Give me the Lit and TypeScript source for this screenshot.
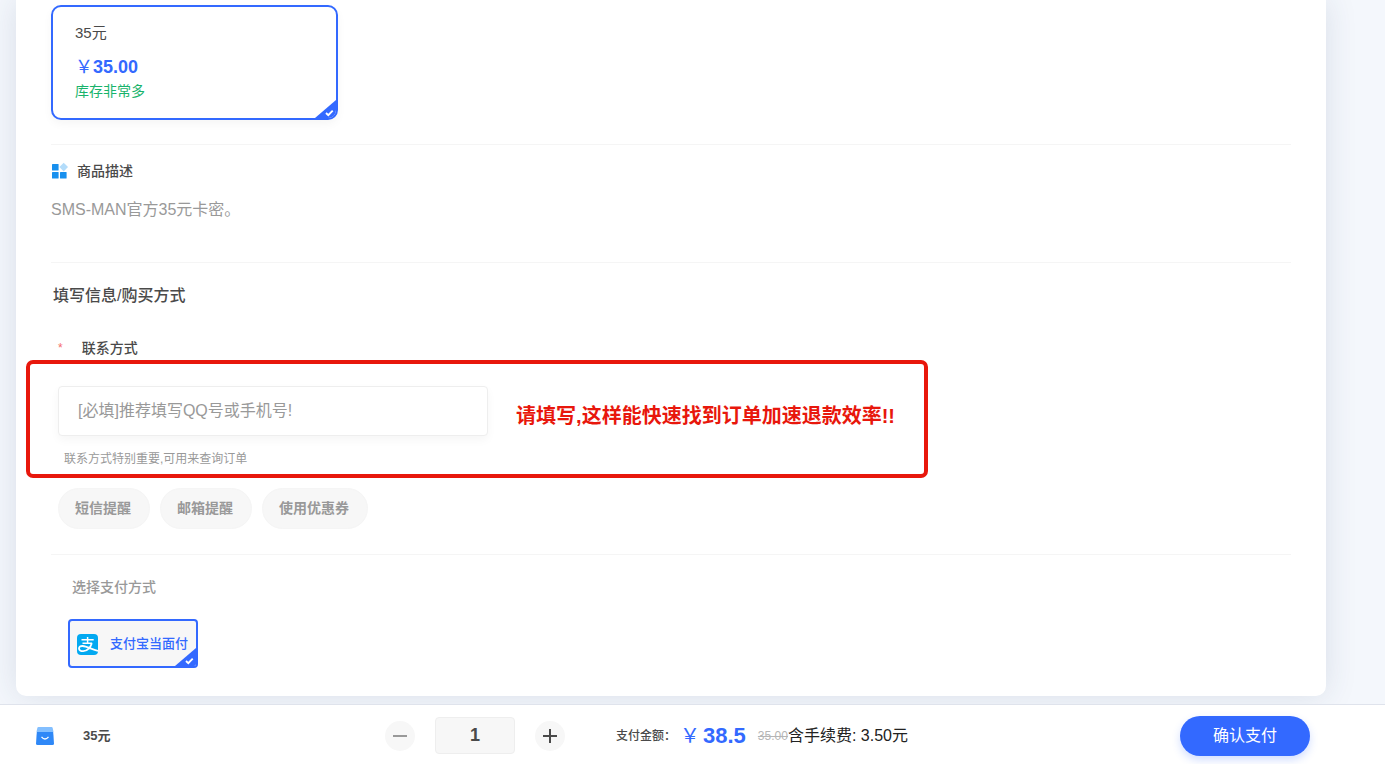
import { LitElement, html, css, svg } from "lit";
import { customElement, property, state } from "lit/decorators.js";

const check = svg`<path d="M11 13l2.300 2.200 4.400-4.600" fill="none" stroke="#fff" stroke-width="1.900"/>`;
const YEN = "\uFFE5";
const COLON = "\uFF1A";

/** Selectable tile with a ticked corner. */
@customElement("pick-tile")
class PickTile extends LitElement {
  @property() name = "";
  @property({ type: Boolean, reflect: true }) compact = false;

  static styles = css`
    :host { display: block; }
    .tile {
      display: block; position: relative; box-sizing: border-box; overflow: hidden;
      border: 2px solid #3369ff; border-radius: 10px; background: #fff;
      box-shadow: 0 4px 10px rgba(0, 0, 0, 0.04); cursor: pointer;
    }
    .compact { border-radius: 4px; background: #f7f7f7; box-shadow: none; }
    .radio { position: absolute; opacity: 0; margin: 0; }
    .corner { position: absolute; right: 0; bottom: 0; display: block; }
  `;

  render() {
    return html`<label class="tile ${this.compact ? "compact" : ""}">
      <input class="radio" type="radio" name=${this.name} checked />
      <slot></slot>
      <svg class="corner" width="21" height="18" viewBox="0 0 21 18" aria-hidden="true">
        <path d="M21 0V18H0z" fill="#3369ff" />${check}
      </svg>
    </label>`;
  }
}

@customElement("app-root")
class AppRoot extends LitElement {
  @state() count = 1;

  static styles = css`
    :host {
      display: flex; flex-direction: column; min-height: 100vh;
      background: #f4f7fc; color: #4a4a4a; overflow: hidden;
      font: 14px/20px "Liberation Sans", "Noto Sans CJK SC", sans-serif;
    }
    * { box-sizing: border-box; }
    h2, p { margin: 0; }
    button, input { font-family: inherit; }
    .card {
      margin: 0 59px 8px 16px; padding: 5px 35px 28px; background: #fff;
      border-radius: 0 0 10px 10px; box-shadow: 0 0 32px rgba(40, 60, 100, 0.13);
    }
    .product { width: 287px; }
    .product-body { display: block; padding: 16px 22px 17px; }
    .product-name { display: block; font-size: 15px; line-height: 20px; }
    .product-price { display: flex; margin-top: 12px; font-size: 18px; line-height: 24px; color: #3369ff; font-weight: 700; }
    .yen { font-weight: 400; }
    .stock { display: block; font-size: 14px; line-height: 20px; margin-top: 2px; color: #18b36b; }
    .section { border-top: 1px solid #f5f5f5; }
    .about { margin-top: 24px; padding: 16px 0 40px; }
    .about-title { display: flex; align-items: center; gap: 8px; font-size: 14px; line-height: 20px; font-weight: 500; }
    .about-text { margin-top: 17px; font-size: 16px; line-height: 24px; color: #999; }
    .form { padding: 21px 0 25px 7px; }
    .form-title { margin-left: -5px; font-size: 16px; line-height: 24px; font-weight: 500; }
    .field-label { display: flex; gap: 19px; margin-top: 30px; line-height: 20px; font-weight: 500; }
    .star { color: #f56c6c; font-size: 12px; font-weight: 400; }
    .contact { position: relative; margin-top: 28px; }
    .contact-input {
      display: block; width: 430px; height: 50px; padding: 0 20px 0 19px;
      border: 1px solid #eee; border-radius: 4px; background: #fff;
      box-shadow: 0 4px 10px rgba(0, 0, 0, 0.04); font-size: 16px; color: #4a4a4a; outline: none;
    }
    .contact-input::placeholder { color: #999; opacity: 1; }
    .hint { margin: 13px 0 0 6px; font-size: 12px; line-height: 20px; color: #999; }
    .callout {
      position: absolute; left: -32px; top: -26px; width: 902px; height: 118px;
      border: 4px solid #e8170c; border-radius: 7px; pointer-events: none;
      display: flex; justify-content: flex-end; padding: 38px 29px 0 0;
      color: #e8170c; font-size: 20px; line-height: 28px; font-weight: 700;
    }
    .pills { display: flex; gap: 10px; margin-top: 19px; }
    .pill {
      height: 41px; padding: 0 18px 3px 16px; border: 1px solid #f5f5f5; border-radius: 21px;
      background: #f7f7f7; color: #999; font-size: 14px; font-weight: 700; cursor: pointer;
    }
    .pay { padding: 22px 0 0 17px; }
    .pay-title { margin-left: 4px; line-height: 20px; font-weight: 500; color: #999; font-size: 14px; }
    .pay-tile { width: 130px; margin-top: 22px; }
    .pay-body { display: flex; align-items: center; gap: 12px; height: 45px; padding: 1px 0 0 7px; white-space: nowrap; font-size: 13px; font-weight: 500; color: #3369ff; }
    .bar {
      display: grid; grid-template-columns: 349px 231px 1fr auto; align-items: center;
      height: 60px; padding: 2px 75px 0 36px; margin-top: auto;
      background: #fff; border-top: 1px solid #dfe3ec; position: relative;
    }
    .order { display: flex; align-items: center; gap: 29px; font-size: 13px; font-weight: 700; }
    .stepper { display: flex; align-items: center; gap: 20px; }
    .step { display: grid; place-items: center; width: 30px; height: 30px; padding: 0; border: 0; border-radius: 50%; background: #f7f7f7; color: #4a4a4a; cursor: pointer; }
    .step:disabled { color: #999; }
    .qty { width: 80px; height: 37px; border: 1px solid #eee; border-radius: 4px; background: #f7f7f7; text-align: center; font-size: 18px; font-weight: 700; color: #4a4a4a; }
    .total { display: flex; align-items: center; white-space: nowrap; }
    .total-label { font-size: 12px; font-weight: 500; }
    .total-price { display: flex; align-items: center; margin: 0 12px 0 4px; color: #3369ff; font-size: 22px; line-height: 28px; font-weight: 700; }
    .total .yen { font-size: 20px; margin-right: 3px; }
    .old { font-size: 12px; color: #b5b5b5; }
    .fee { font-size: 16px; color: #222; }
    .confirm { width: 130px; height: 40px; padding: 0 0 3px; border: 0; border-radius: 20px; background: #3369ff; color: #fff; font-size: 16px; box-shadow: 0 4px 8px rgba(51, 105, 255, 0.22); cursor: pointer; }
  `;

  render() {
    return html`
      <main class="card">
        <pick-tile class="product" name="product">
          <span class="product-body">
            <span class="product-name">35元</span>
            <span class="product-price"><span class="yen">${YEN}</span>35.00</span>
            <span class="stock">库存非常多</span>
          </span>
        </pick-tile>

        <section class="section about">
          <h2 class="about-title">
            <svg width="18" height="18" viewBox="0 0 18 18" aria-hidden="true">
              <g fill="#1890ee">
                <rect x="1" y="2" width="6.600" height="6.600" rx=".6" />
                <rect x="1" y="10" width="6.600" height="6.600" rx=".6" />
                <rect x="9" y="10" width="6.600" height="6.600" rx=".6" />
              </g>
              <path d="M12.700 0.800l4.300 4.300-4.300 4.300-4.300-4.300z" fill="#b3dcfa" />
            </svg>
            商品描述
          </h2>
          <p class="about-text">SMS-MAN官方35元卡密。</p>
        </section>

        <section class="section form">
          <h2 class="form-title">填写信息/购买方式</h2>
          <label class="field-label" for="contact"><span class="star">*</span>联系方式</label>
          <div class="contact">
            <input class="contact-input" id="contact" type="text" placeholder="[必填]推荐填写QQ号或手机号!" />
            <p class="hint">联系方式特别重要,可用来查询订单</p>
            <div class="callout">请填写,这样能快速找到订单加速退款效率!!</div>
          </div>
          <div class="pills">
            ${["短信提醒", "邮箱提醒", "使用优惠券"].map((t) => html`<button class="pill" type="button">${t}</button>`)}
          </div>
        </section>

        <section class="section pay">
          <h2 class="pay-title">选择支付方式</h2>
          <pick-tile class="pay-tile" name="payment" compact>
            <span class="pay-body">
              <svg width="21" height="21" viewBox="0 0 21 21" aria-hidden="true">
                <rect width="21" height="21" rx="4" fill="#02a9f1" />
                <g fill="none" stroke="#fff">
                  <path d="M4.500 5.700h12.200M10.600 3v6.200M5.500 9.200h9.600" stroke-width="1.500" />
                  <path d="M14.800 9.200c-1.100 3.700-4.300 8-8.600 8-2.600 0-4.200-1.100-4.200-2.700 0-1.600 1.500-2.600 3.600-2.500 3.800.2 8.400 2.900 15.400 5" stroke-width="1.800" />
                </g>
              </svg>
              支付宝当面付
            </span>
          </pick-tile>
        </section>
      </main>

      <footer class="bar">
        <div class="order">
          <svg width="18" height="18" viewBox="0 0 18 18" aria-hidden="true">
            <path d="M2.500 0h13q1 0 1.200 1l.8 4H.5l.8-4Q1.500 0 2.500 0z" fill="#83bfff" />
            <path d="M.8 5h16.400l.8 11.500Q18 18 16.500 18h-15Q0 18 0 16.500z" fill="#2f88f7" />
            <path d="M5.500 9.800q3.500 4.400 7 0" fill="none" stroke="#fff" stroke-width="1.300" />
          </svg>
          35元
        </div>
        <div class="stepper">
          <button class="step" type="button" aria-label="-" ?disabled=${this.count <= 1} @click=${() => this.count--}>
            <svg width="14" height="14" viewBox="0 0 14 14"><path d="M0 7h14" stroke="currentColor" stroke-width="2" /></svg>
          </button>
          <input class="qty" type="text" aria-label="1" .value=${String(this.count)} />
          <button class="step" type="button" aria-label="+" @click=${() => this.count++}>
            <svg width="14" height="14" viewBox="0 0 14 14"><path d="M0 7h14M7 0v14" stroke="currentColor" stroke-width="2" /></svg>
          </button>
        </div>
        <div class="total">
          <span class="total-label">支付金额${COLON}</span>
          <span class="total-price"><span class="yen">${YEN}</span>38.5</span>
          <s class="old">35.00</s><span class="fee">含手续费: 3.50元</span>
        </div>
        <button class="confirm" type="button">确认支付</button>
      </footer>
    `;
  }
}
